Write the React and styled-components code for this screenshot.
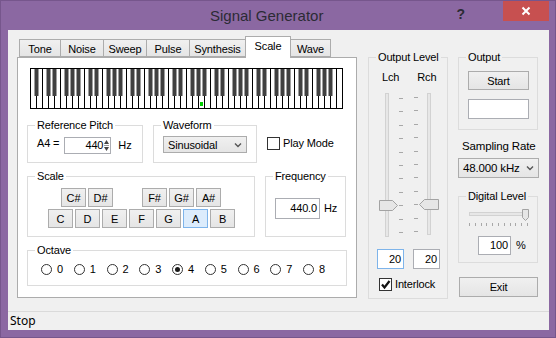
import React from 'react';
import styled, { createGlobalStyle } from 'styled-components';

const GlobalStyle = createGlobalStyle`
  html, body { margin: 0; padding: 0; }
  body {
    width: 556px;
    height: 338px;
    overflow: hidden;
    font-family: "Liberation Sans", Arial, sans-serif;
    font-size: 11px;
    letter-spacing: -0.15px;
    color: #000;
  }
`;

const Frame = styled.div`
  width: 556px;
  height: 338px;
  box-sizing: border-box;
  background: #8b68a2;
  border: 1px solid #76568c;
  display: flex;
  flex-direction: column;
`;

const TitleBar = styled.div`
  height: 29px;
  display: flex;
  align-items: flex-start;
  flex-shrink: 0;
`;

const Title = styled.div`
  margin: 6px 0 0 209px;
  font-size: 15px;
  letter-spacing: 0;
  color: #2b2b35;
`;

const Help = styled.div`
  margin: 5px 0 0 auto;
  font-size: 14px;
  font-weight: bold;
  color: #2b2b35;
  letter-spacing: 0;
`;

const Close = styled.div`
  width: 46px;
  height: 20px;
  margin: 0 6px 0 38px;
  background: #c75050;
  color: #fff;
  display: flex;
  align-items: center;
  justify-content: center;
`;

const Client = styled.div`
  flex: 1;
  margin: 0 6px 7px 7px;
  background: #f0f0f0;
  display: flex;
  flex-direction: column;
`;

const Main = styled.div`
  height: 281px;
  box-sizing: border-box;
  padding: 6px 0 0 9px;
  display: flex;
  align-items: flex-start;
`;

const StatusBar = styled.div`
  flex: 1;
  border-top: 1px solid #dadada;
  padding-left: 2px;
  font-family: "Noto Sans", "Open Sans", sans-serif;
  font-size: 12px;
  letter-spacing: 0;
  line-height: 18px;
`;

const TabControl = styled.div`
  width: 340px;
  display: flex;
  flex-direction: column;
`;

const TabStrip = styled.div`
  height: 21px;
  display: flex;
  align-items: flex-end;
  padding-left: 2px;
`;

const Tab = styled.div`
  position: relative;
  width: ${p => p.$w}px;
  height: ${p => (p.$active ? 22 : 18)}px;
  box-sizing: border-box;
  margin-right: -1px;
  margin-bottom: ${p => (p.$active ? -1 : 0)}px;
  border: 1px solid #acacac;
  border-bottom: ${p => (p.$active ? 'none' : '1px solid #acacac')};
  background: ${p => (p.$active ? '#fff' : 'linear-gradient(#f0f0f0, #e5e5e5)')};
  z-index: ${p => (p.$active ? 2 : 1)};
  display: flex;
  justify-content: center;
  padding-top: ${p => (p.$active ? 3 : 3)}px;
  font-size: 11px;
`;

const Panel = styled.div`
  height: 241px;
  box-sizing: border-box;
  border: 1px solid #acacac;
  background: #fff;
  padding: 10px 0 0 9px;
  display: flex;
  flex-direction: column;
  align-items: flex-start;
`;

const Keyboard = styled.svg`
  display: block;
  margin-left: 3px;
`;

const Row = styled.div`
  display: flex;
  align-items: ${p => p.$align || 'flex-start'};
  margin-top: ${p => p.$top}px;
`;

const Group = styled.div`
  position: relative;
  box-sizing: border-box;
  width: ${p => p.$w}px;
  height: ${p => p.$h}px;
  margin-left: ${p => p.$ml || 0}px;
  margin-top: ${p => p.$mt || 0}px;
  border: 1px solid #dcdcdc;
  padding: ${p => p.$pad || '0'};
  display: flex;
  flex-direction: ${p => p.$dir || 'row'};
  align-items: ${p => p.$items || 'flex-start'};
`;

const Legend = styled.span`
  position: absolute;
  top: -7px;
  left: 7px;
  padding: 0 2px;
  line-height: 13px;
  background: ${p => p.$bg || '#fff'};
`;

const Text = styled.span`
  margin-left: ${p => p.$ml || 0}px;
  line-height: 13px;
  white-space: nowrap;
`;

const Field = styled.div`
  position: relative;
  box-sizing: border-box;
  width: ${p => p.$w}px;
  height: ${p => p.$h}px;
  margin-left: ${p => p.$ml || 0}px;
  border: 1px solid ${p => (p.$focus ? '#7eb4ea' : '#abadb3')};
  background: #fff;
  display: flex;
  align-items: center;
  justify-content: flex-end;
  padding-right: ${p => p.$pr || 2}px;
  line-height: 13px;
`;

const Spin = styled.svg`
  margin-left: 1px;
  flex-shrink: 0;
`;

const Select = styled.div`
  box-sizing: border-box;
  width: ${p => p.$w}px;
  height: ${p => p.$h}px;
  margin-top: ${p => p.$mt || 0}px;
  border: 1px solid #acacac;
  background: linear-gradient(#f0f0f0, #e5e5e5);
  display: flex;
  align-items: center;
  padding: 0 4px 0 4px;
  font-size: ${p => p.$fs || 11}px;
  justify-content: space-between;
`;

const Check = styled.span`
  box-sizing: border-box;
  width: 13px;
  height: 13px;
  border: 1px solid #333;
  background: #fff;
  display: flex;
  align-items: center;
  justify-content: center;
  flex-shrink: 0;
`;

const CheckRow = styled.div`
  display: flex;
  align-items: center;
  margin-left: ${p => p.$ml || 0}px;
  margin-top: ${p => p.$mt || 0}px;
  font-size: ${p => p.$fs || 11}px;
`;

const KeyRow = styled.div`
  display: flex;
  gap: 2px;
  padding-left: ${p => p.$pl}px;
  margin-top: ${p => p.$mt || 0}px;
`;

const Button = styled.div`
  box-sizing: border-box;
  width: ${p => p.$w || 25}px;
  height: ${p => p.$h || 19}px;
  margin-left: ${p => p.$ml || 0}px;
  margin-top: ${p => p.$mt || 0}px;
  visibility: ${p => (p.$hidden ? 'hidden' : 'visible')};
  border: 1px solid ${p => (p.$active ? '#7eb4ea' : '#acacac')};
  background: ${p => (p.$active ? '#dcecfc' : 'linear-gradient(#f0f0f0, #e5e5e5)')};
  display: flex;
  align-items: center;
  justify-content: center;
  font-size: ${p => p.$fs || 11}px;
`;

const Radios = styled.div`
  display: flex;
`;

const RadioItem = styled.div`
  width: 32.75px;
  display: flex;
  align-items: center;
  line-height: 13px;
`;

const Radio = styled.span`
  position: relative;
  box-sizing: border-box;
  width: 11px;
  height: 11px;
  border-radius: 50%;
  border: 1px solid #333;
  background: #fff;
  margin-right: 5px;
  &::after {
    content: '';
    display: ${p => (p.$on ? 'block' : 'none')};
    position: absolute;
    left: 2px;
    top: 2px;
    width: 5px;
    height: 5px;
    border-radius: 50%;
    background: #1a1a1a;
  }
`;

const Column = styled.div`
  display: flex;
  flex-direction: column;
  margin-left: ${p => p.$ml}px;
  margin-top: ${p => p.$mt}px;
`;

const ChannelLabels = styled.div`
  display: flex;
  gap: 18px;
  margin: 13px 0 0 13px;
  line-height: 13px;
`;

const Slider = styled.svg`
  display: block;
  margin: ${p => p.$m};
`;

const Tabs = [
  ['Tone', 42], ['Noise', 44], ['Sweep', 44], ['Pulse', 44],
  ['Synthesis', 57], ['Scale', 46, true], ['Wave', 41]
];

const PianoKeys = () => {
  const letters = ['A', 'B', 'C', 'D', 'E', 'F', 'G'];
  const lines = [];
  const blacks = [];
  for (let i = 1; i < 52; i++) {
    lines.push(<line key={'l' + i} x1={i * 6 + 0.5} y1={1} x2={i * 6 + 0.5} y2={40} stroke="#000" />);
  }
  for (let i = 0; i < 51; i++) {
    const l = letters[i % 7];
    if (l !== 'B' && l !== 'E') {
      blacks.push(<rect key={'b' + i} x={(i + 1) * 6 - 1.5} y={1} width={4} height={27} fill="#404040" />);
    }
  }
  return (
    <Keyboard width="313" height="41" viewBox="0 0 313 41">
      <rect x="0.5" y="0.5" width="312" height="40" fill="#fff" stroke="#000" />
      {lines}
      {blacks}
      <rect x="170" y="34" width="3" height="4" fill="#00d000" />
    </Keyboard>
  );
};

const Chevron = () => (
  <svg width="8" height="6" viewBox="0 0 8 6">
    <path d="M1 1.5 L4 4.5 L7 1.5" fill="none" stroke="#555" strokeWidth="1.4" />
  </svg>
);

const CheckMark = () => (
  <svg width="11" height="11" viewBox="0 0 11 11">
    <path d="M2 5.5 L4.5 8.5 L9.5 2" fill="none" stroke="#111" strokeWidth="2.2" />
  </svg>
);

const tickYs = Array.from({ length: 11 }, (_, i) => 6 + i * 13.4);

const LevelSliders = () => (
  <Slider $m="8px 0 0 9px" width="63" height="146" viewBox="0 0 63 146">
    <rect x="7.5" y="1.5" width="3" height="143" fill="#e7e7e7" stroke="#d2d2d2" />
    <rect x="49.5" y="1.5" width="3" height="141" fill="#e7e7e7" stroke="#d2d2d2" />
    {tickYs.map(y => (
      <g key={y}>
        <line x1="21" x2="25" y1={Math.round(y) + 0.5} y2={Math.round(y) + 0.5} stroke="#a8a8a8" />
        <line x1="36" x2="40" y1={Math.round(y) - 0.5} y2={Math.round(y) - 0.5} stroke="#a8a8a8" />
      </g>
    ))}
    <path d="M1.5 108.5 H14.5 L19.5 113.5 L14.5 118.5 H1.5 Z" fill="#e6e6e6" stroke="#a3a3a3" />
    <path d="M60.5 107.5 H46.5 L41.5 112.5 L46.5 117.5 H60.5 Z" fill="#e6e6e6" stroke="#a3a3a3" />
  </Slider>
);

const DigitalSlider = () => (
  <Slider $m="10px 0 0 9px" width="62" height="22" viewBox="0 0 62 22">
    <rect x="1.5" y="5.5" width="58" height="3" fill="#e7e7e7" stroke="#d2d2d2" />
    {Array.from({ length: 11 }, (_, i) => (
      <line key={i} x1={Math.round(1 + i * 5.8) + 0.5} x2={Math.round(1 + i * 5.8) + 0.5} y1="16" y2="19" stroke="#a8a8a8" />
    ))}
    <path d="M54.5 2.5 H60.5 V10.5 L57.5 13.5 L54.5 10.5 Z" fill="#e6e6e6" stroke="#a3a3a3" />
  </Slider>
);

const App = () => (
  <>
    <GlobalStyle />
    <Frame>
      <TitleBar>
        <Title>Signal Generator</Title>
        <Help>?</Help>
        <Close>
          <svg width="10" height="10" viewBox="0 0 10 10">
            <path d="M1.5 1.5 L8.5 8.5 M8.5 1.5 L1.5 8.5" stroke="#fff" strokeWidth="2" />
          </svg>
        </Close>
      </TitleBar>
      <Client>
        <Main>
          <TabControl>
            <TabStrip>
              {Tabs.map(([name, w, active]) => (
                <Tab key={name} $w={w} $active={active}>{name}</Tab>
              ))}
            </TabStrip>
            <Panel>
              <PianoKeys />
              <Row $top={16}>
                <Group $w={116} $h={38} $pad="11px 0 0 9px">
                  <Legend>Reference Pitch</Legend>
                  <Text>A4 =</Text>
                  <Field $w={47} $h={17} $ml={5} $pr={1}>
                    440
                    <Spin width="5" height="13" viewBox="0 0 5 13">
                      <path d="M0 5 L2.5 1 L5 5 Z M0 8 L2.5 12 L5 8 Z" fill="#444" />
                      <line x1="0" x2="5" y1="6.5" y2="6.5" stroke="#999" />
                    </Spin>
                  </Field>
                  <Text $ml={7} style={{ marginTop: 2 }}>Hz</Text>
                </Group>
                <Group $w={104} $h={38} $ml={10} $pad="10px 0 0 9px">
                  <Legend>Waveform</Legend>
                  <Select $w={84} $h={17}>
                    Sinusoidal
                    <Chevron />
                  </Select>
                </Group>
                <CheckRow $ml={10} $mt={12}>
                  <Check />
                  <Text $ml={3}>Play Mode</Text>
                </CheckRow>
              </Row>
              <Row $top={13}>
                <Group $w={228} $h={61} $pad="11px 0 0 0" $dir="column">
                  <Legend>Scale</Legend>
                  <KeyRow $pl={33}>
                    <Button>C#</Button>
                    <Button>D#</Button>
                    <Button $hidden />
                    <Button>F#</Button>
                    <Button>G#</Button>
                    <Button>A#</Button>
                  </KeyRow>
                  <KeyRow $pl={20} $mt={2}>
                    {['C', 'D', 'E', 'F', 'G', 'A', 'B'].map(n => (
                      <Button key={n} $active={n === 'A'}>{n}</Button>
                    ))}
                  </KeyRow>
                </Group>
                <Group $w={81} $h={61} $ml={10} $pad="21px 0 0 9px" $items="center">
                  <Legend>Frequency</Legend>
                  <Field $w={45} $h={21} style={{ alignSelf: 'flex-start' }}>440.0</Field>
                  <Text $ml={4} style={{ alignSelf: 'flex-start', marginTop: 4 }}>Hz</Text>
                </Group>
              </Row>
              <Row $top={13}>
                <Group $w={320} $h={36} $pad="12px 0 0 13px">
                  <Legend>Octave</Legend>
                  <Radios>
                    {[0, 1, 2, 3, 4, 5, 6, 7, 8].map(n => (
                      <RadioItem key={n}>
                        <Radio $on={n === 4} />
                        {n}
                      </RadioItem>
                    ))}
                  </Radios>
                </Group>
              </Row>
            </Panel>
          </TabControl>

          <Group $w={80} $h={242} $ml={11} $mt={21} $dir="column">
            <Legend $bg="#f0f0f0">Output Level</Legend>
            <ChannelLabels>
              <span>Lch</span>
              <span>Rch</span>
            </ChannelLabels>
            <LevelSliders />
            <Row $top={11} style={{ marginLeft: 8, gap: 9 }}>
              <Field $w={27} $h={20} $focus>20</Field>
              <Field $w={27} $h={20}>20</Field>
            </Row>
            <CheckRow $ml={10} $mt={9}>
              <Check><CheckMark /></Check>
              <Text $ml={3}>Interlock</Text>
            </CheckRow>
          </Group>

          <Column $ml={10} $mt={21}>
            <Group $w={80} $h={73} $pad="13px 0 0 9px" $dir="column">
              <Legend $bg="#f0f0f0">Output</Legend>
              <Button $w={61} $h={19}>Start</Button>
              <Field $w={61} $h={20} style={{ marginTop: 9 }} />
            </Group>
            <Text $ml={4} style={{ marginTop: 10, fontSize: 11.5 }}>Sampling Rate</Text>
            <Select $w={81} $h={20} $mt={5} $fs={11.5}>
              48.000 kHz
              <Chevron />
            </Select>
            <Group $w={80} $h={67} $mt={18} $dir="column">
              <Legend $bg="#f0f0f0">Digital Level</Legend>
              <DigitalSlider />
              <Row $top={7} $align="center" style={{ marginLeft: 19 }}>
                <Field $w={33} $h={19}>100</Field>
                <Text $ml={5}>%</Text>
              </Row>
            </Group>
            <Button $w={79} $h={20} $ml={1} $mt={14}>Exit</Button>
          </Column>
        </Main>
        <StatusBar>Stop</StatusBar>
      </Client>
    </Frame>
  </>
);

export default App;
